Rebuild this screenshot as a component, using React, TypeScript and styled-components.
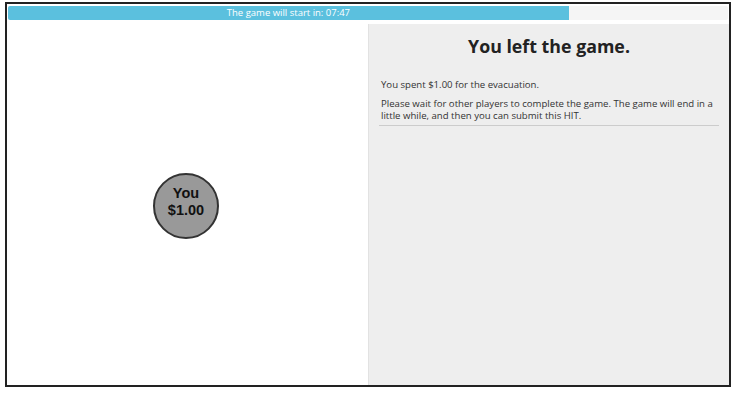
import React from "react";
import styled, { createGlobalStyle } from "styled-components";

const Global = createGlobalStyle`
  html, body { margin: 0; padding: 0; background: #fff; }
  body { font-family: "Open Sans", "Liberation Sans", sans-serif; }
  * { box-sizing: border-box; }
`;

const Frame = styled.div`
  margin: 2px 0 0 5px;
  width: 726px;
  height: 385px;
  border: 2px solid #222;
  display: flex;
  flex-direction: column;
  background: #fff;
`;

const Progress = styled.div`
  margin: 2px 1px 4px 1px;
  height: 14px;
  background: #f5f5f5;
  border-radius: 2px;
  overflow: hidden;
  display: flex;
`;

const ProgressFill = styled.div`
  height: 100%;
  background: #5bc0de;
  color: #fff;
  font-size: 9.5px;
  line-height: 14px;
  text-align: center;
  white-space: nowrap;
`;

const Panels = styled.div`
  flex: 1;
  display: grid;
  grid-template-columns: 361px 1fr;
  min-height: 0;
`;

const Board = styled.div`
  display: flex;
  align-items: center;
  justify-content: center;
  background: #fff;
`;

const Token = styled.div`
  width: 66px;
  height: 66px;
  border-radius: 50%;
  background: #999;
  border: 2px solid #333;
  display: flex;
  flex-direction: column;
  align-items: center;
  justify-content: center;
  font-family: "Liberation Sans", Arial, sans-serif;
  font-weight: bold;
  font-size: 14.5px;
  line-height: 17px;
  color: #111;
  margin-top: 3px;
  margin-left: -3px;
  padding-bottom: 8px;
`;

const Side = styled.div`
  background: #eee;
  border-left: 1px solid #e2e2e2;
  padding: 10px 10px 0 10px;
  color: #333;
`;

const Title = styled.h1`
  margin: 0;
  text-align: center;
  font-size: 17.8px;
  font-weight: 700;
  line-height: 24px;
  color: #222;
`;

const Para = styled.p<{ $first?: boolean }>`
  margin: ${(p) => (p.$first ? "21px 0 7px 2px" : "0 0 4px 2px")};
  font-size: 9.6px;
  line-height: ${(p) => (p.$first ? "12px" : "11.5px")};
  color: #333;
`;

const Rule = styled.hr`
  margin: 0;
  border: 0;
  border-top: 1px solid #ccc;
`;

export default function App() {
  return (
    <>
      <Global />
      <Frame>
        <Progress>
          <ProgressFill style={{ width: "77.9%" }}>The game will start in: 07:47</ProgressFill>
        </Progress>
        <Panels>
          <Board>
            <Token>
              <span>You</span>
              <span>$1.00</span>
            </Token>
          </Board>
          <Side>
            <Title>You left the game.</Title>
            <Para $first>You spent $1.00 for the evacuation.</Para>
            <Para>
              Please wait for other players to complete the game. The game will end in a little
              while, and then you can submit this HIT.
            </Para>
            <Rule />
          </Side>
        </Panels>
      </Frame>
    </>
  );
}
